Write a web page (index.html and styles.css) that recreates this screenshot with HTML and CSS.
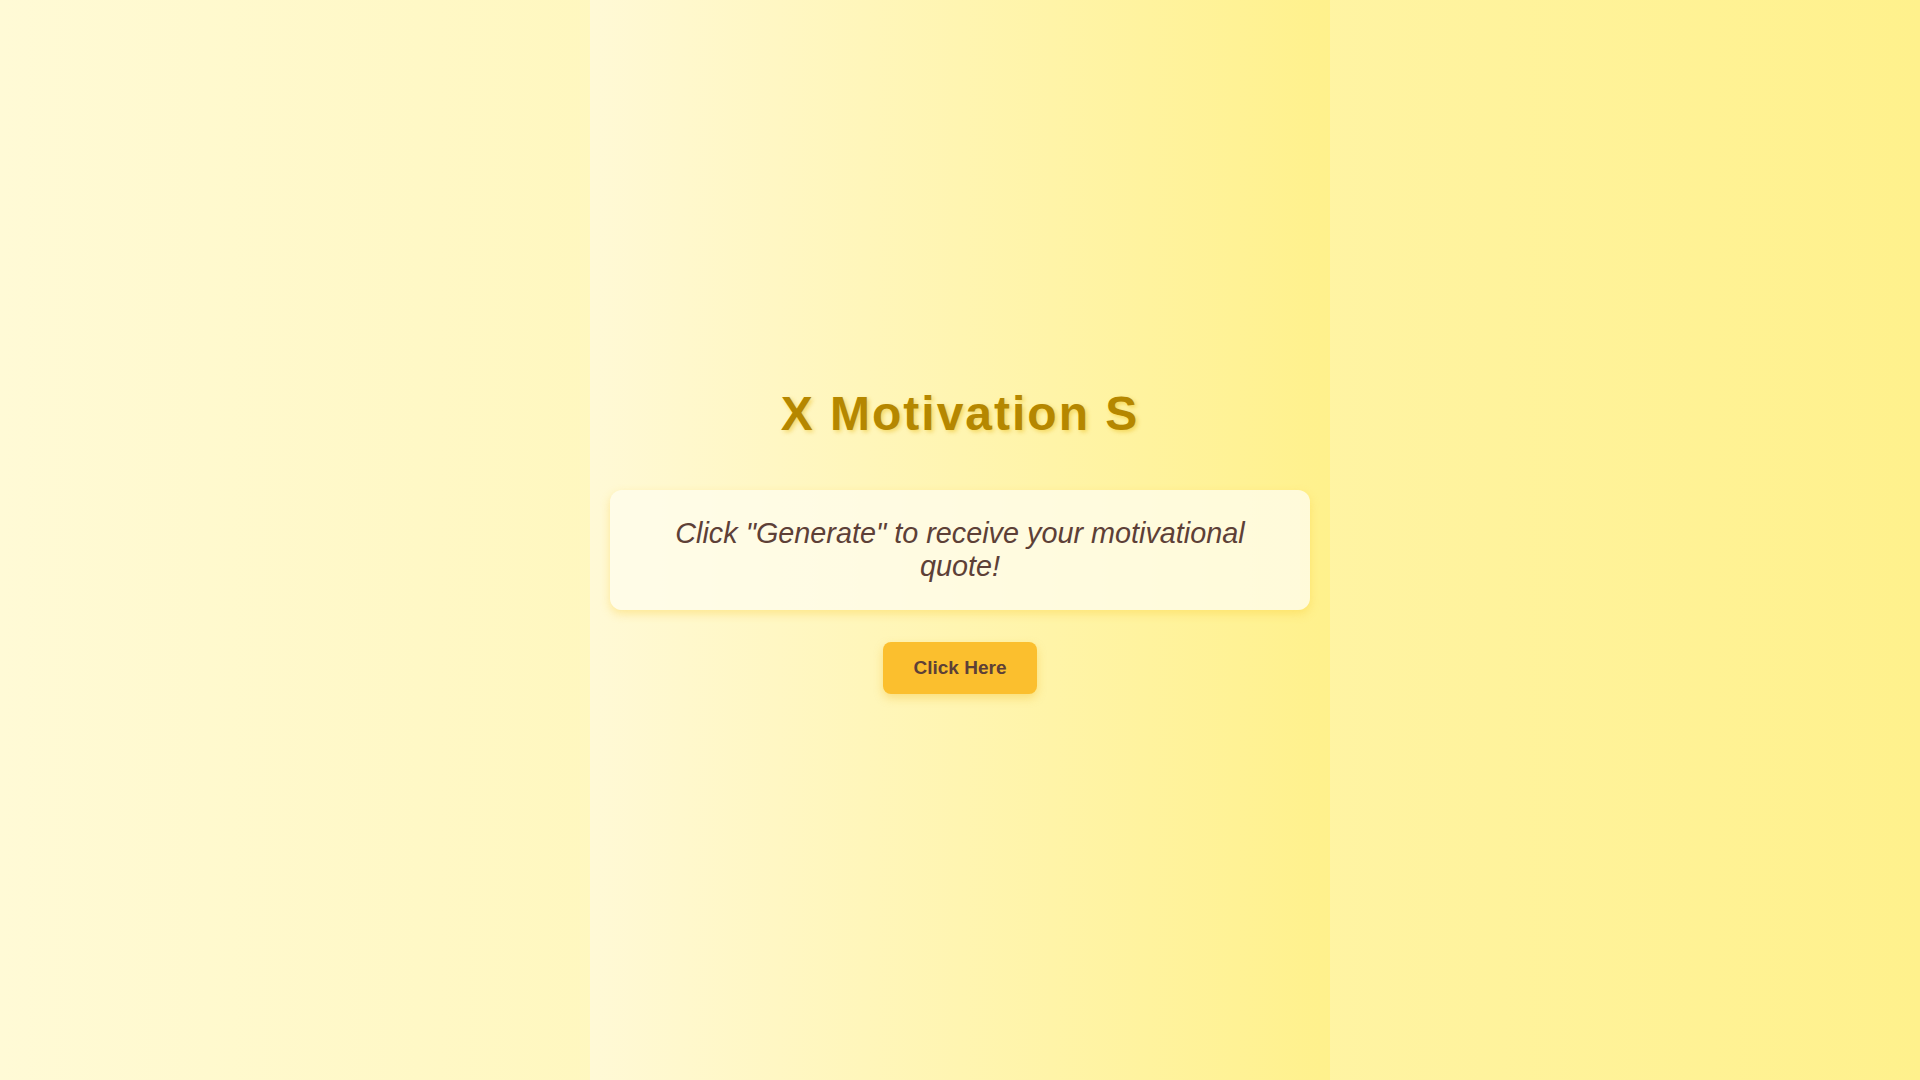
FILE: index.html
```html
<!DOCTYPE html>
<html lang="en">
<head>
<meta charset="UTF-8">
<title>X Motivation S</title>
<link rel="stylesheet" href="styles.css">
</head>
<body>
<main class="container">
  <h1 class="title">X Motivation S</h1>
  <div class="quote-card">
    <p class="quote">Click "Generate" to receive your motivational quote!</p>
  </div>
  <button class="btn" type="button">Click Here</button>
</main>
</body>
</html>
```

FILE: styles.css
```css
html, body {
  margin: 0;
  padding: 0;
  height: 100%;
}
body {
  font-family: "Liberation Sans", Arial, sans-serif;
  background: linear-gradient(to right, #fffad6, #fff18c);
  display: flex;
  justify-content: center;
}
.container {
  box-sizing: border-box;
  width: 740px;
  min-height: 100vh;
  padding: 0 20px;
  background: linear-gradient(to right, #fff9d6, #fff18c);
  display: flex;
  flex-direction: column;
  align-items: center;
  justify-content: center;
}
.title {
  margin: 0 0 48px;
  font-size: 48px;
  font-weight: bold;
  letter-spacing: 2px;
  color: #b58700;
  text-shadow: 2px 2px 4px rgba(230, 180, 0, 0.45);
  line-height: 1.15;
}
.quote-card {
  box-sizing: border-box;
  width: 700px;
  padding: 27px 40px;
  border-radius: 12px;
  background: rgba(255, 253, 236, 0.8);
  box-shadow: 0 4px 10px rgba(250, 200, 40, 0.35);
  text-align: center;
}
.quote {
  margin: 0;
  font-size: 28.8px;
  font-style: italic;
  line-height: 33px;
  color: #5d4037;
}
.btn {
  margin-top: 32px;
  padding: 15px 31px;
  border: none;
  border-radius: 8px;
  background: #fbbf2e;
  color: #5d4037;
  font-family: "Liberation Sans", Arial, sans-serif;
  font-size: 19px;
  font-weight: bold;
  line-height: 22px;
  box-shadow: 0 4px 10px rgba(240, 180, 20, 0.35);
  cursor: pointer;
}
```
